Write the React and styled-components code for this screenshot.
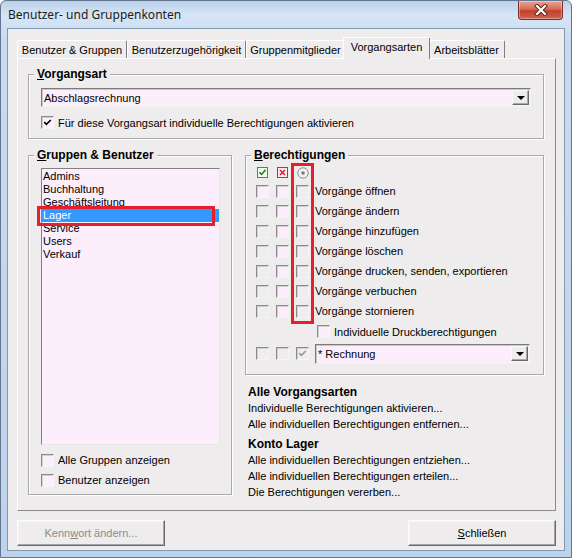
import React from 'react'
import styled, { createGlobalStyle } from 'styled-components'

const BG = '#eeecec'
const PINK = '#fdeefc'
const FONT = '"Liberation Sans", Arial, sans-serif'

const GlobalStyle = createGlobalStyle`
  html, body { margin: 0; padding: 0; background: #fff; }
  body { font-family: ${FONT}; font-size: 11px; color: #000; }
  * { box-sizing: border-box; }
`

const Window = styled.div`
  width: 572px;
  height: 558px;
  border: 1px solid #62778f;
  border-radius: 6px 6px 0 0;
  background: linear-gradient(180deg, #bad1eb 0px, #d6e5f6 14px, #c8dbf0 40px, #bdd3eb 100%);
  padding: 0 6px 6px;
  display: flex;
  flex-direction: column;
  overflow: hidden;
`

const TitleBar = styled.div`
  height: 27px;
  display: flex;
  justify-content: space-between;
  align-items: flex-start;
`

const Title = styled.div`
  font-family: "Noto Sans", ${FONT};
  font-size: 12px;
  line-height: 16px;
  color: #1b1b1b;
  margin: 6px 0 0 1px;
`

const CloseButton = styled.div`
  width: 45px;
  height: 19px;
  margin-right: 2px;
  border: 1px solid #7a2e25;
  border-top: none;
  border-radius: 0 0 4px 4px;
  background: linear-gradient(180deg, #e9a598 0%, #d66a58 45%, #c23f2d 55%, #d2644d 100%);
  box-shadow: inset 0 0 0 1px rgba(255, 255, 255, 0.35);
  display: flex;
  align-items: center;
  justify-content: center;
`

const Client = styled.div`
  flex: 1;
  border: 1px solid #8299b4;
  background: ${BG};
  padding: 8px 8px 0 9px;
  display: flex;
  flex-direction: column;
`

const TabStrip = styled.div`
  height: 21px;
  display: flex;
  align-items: flex-end;
`

const Tab = styled.div`
  position: relative;
  width: ${p => p.$w}px;
  height: ${p => (p.$active ? 22 : 18)}px;
  margin: ${p => (p.$active ? '0 -2px -1px' : '0')};
  z-index: ${p => (p.$active ? 2 : 1)};
  border: 1px solid;
  border-bottom: none;
  border-color: #fff #7e7e7e #7e7e7e #fff;
  border-radius: 2px 2px 0 0;
  background: ${BG};
  display: flex;
  align-items: ${p => (p.$active ? 'flex-start' : 'center')};
  justify-content: center;
  padding-top: ${p => (p.$active ? 3 : 0)}px;
  white-space: nowrap;
`

const Panel = styled.div`
  width: 539px;
  height: 453px;
  border: 1px solid;
  border-color: #fff #8a8a8a #8a8a8a #fff;
  padding: 15px 11px 0 10px;
  display: flex;
  flex-direction: column;
`

const Group = styled.div`
  position: relative;
  width: ${p => p.$w}px;
  height: ${p => p.$h}px;
  border: 1px solid #a9a9a9;
  box-shadow: 1px 1px 0 #fff, inset 1px 1px 0 #fff;
  padding: ${p => p.$pad};
  display: flex;
  flex-direction: column;
`

const Legend = styled.span`
  position: absolute;
  top: -8px;
  left: 5px;
  padding: 0 3px;
  background: ${BG};
  font-weight: bold;
  font-size: 12px;
  line-height: 15px;
`

const Key = styled.span`
  text-decoration: underline;
`

const Combo = styled.div`
  width: ${p => p.$w}px;
  height: ${p => p.$h}px;
  flex: none;
  border: 1px solid;
  border-color: #7c7c7c #f2f2f2 #f2f2f2 #7c7c7c;
  box-shadow: inset 1px 1px 0 #c8c8c8;
  background: ${PINK};
  padding: 1px 1px 1px 2px;
  display: flex;
  align-items: center;
  justify-content: space-between;
`

const DropButton = styled.span`
  width: 17px;
  height: 15px;
  border: 1px solid;
  border-color: #fbfbfb #6a6a6a #6a6a6a #fbfbfb;
  box-shadow: inset -1px -1px 0 #a8a8a8;
  background: ${BG};
  display: flex;
  align-items: center;
  justify-content: center;

  &::after {
    content: '';
    border-left: 4px solid transparent;
    border-right: 4px solid transparent;
    border-top: 4px solid #000;
  }
`

const CheckRow = styled.div`
  height: ${p => p.$h || 20}px;
  margin-top: ${p => p.$mt || 0}px;
  padding-left: ${p => p.$indent || 0}px;
  display: flex;
  align-items: center;
  gap: 4px;
  white-space: nowrap;
`

const Box = styled.span`
  width: 13px;
  height: 13px;
  flex: none;
  border: 1px solid;
  border-color: #8a8a8a #f6f6f6 #f6f6f6 #8a8a8a;
  box-shadow: inset 1px 1px 0 #d0d0d0;
  background: ${p => (p.$disabled ? '#efeded' : PINK)};
  display: flex;
  align-items: center;
  justify-content: center;
`

const Columns = styled.div`
  display: flex;
  gap: 13px;
  margin-top: 16px;
`

const RightCol = styled.div`
  display: flex;
  flex-direction: column;
`

const ListBox = styled.div`
  position: relative;
  width: 179px;
  height: 277px;
  flex: none;
  border: 1px solid;
  border-color: #828282 #e6e6e6 #e6e6e6 #828282;
  background: ${PINK};
  padding: 1px 0;
`

const Item = styled.div`
  height: 13px;
  line-height: 13px;
  padding-left: 1px;
  background: ${p => (p.$selected ? '#3399ff' : 'transparent')};
  color: ${p => (p.$selected ? '#fff' : '#000')};
`

const Mark = styled.span`
  position: absolute;
  left: ${p => p.$x}px;
  top: ${p => p.$y}px;
  width: ${p => p.$w}px;
  height: ${p => p.$h}px;
  border: 3px solid #e3202b;
  pointer-events: none;
`

const PermList = styled.div`
  position: relative;
  display: flex;
  flex-direction: column;
`

const PermRow = styled.div`
  height: ${p => p.$h}px;
  display: flex;
  align-items: center;
  gap: 7px;
  white-space: nowrap;
`

const Cell = styled.span`
  width: 13px;
  height: 13px;
  flex: none;
  display: flex;
  align-items: center;
  justify-content: center;
`

const PermLabel = styled.span`
  margin-left: -1px;
`

const Actions = styled.div`
  margin-top: 9px;
  padding-left: 3px;
  display: flex;
  flex-direction: column;
`

const ActionHead = styled.div`
  font-weight: bold;
  font-size: 12px;
  line-height: 16px;
  margin-top: ${p => (p.$gap ? 4 : 0)}px;
`

const ActionLink = styled.div`
  line-height: 16px;
`

const ButtonRow = styled.div`
  width: 539px;
  margin-top: 9px;
  display: flex;
  justify-content: space-between;
`

const Button = styled.div`
  width: 148px;
  height: 26px;
  border: 1px solid;
  border-color: #fbfbfb #6a6a6a #6a6a6a #fbfbfb;
  box-shadow: inset -1px -1px 0 #a6a6a6, inset 1px 1px 0 #f4f4f4;
  background: ${BG};
  color: ${p => (p.$disabled ? '#8c8c8c' : '#000')};
  display: flex;
  align-items: center;
  justify-content: center;
`

const Check = ({ color = '#000' }) => (
  <svg width="9" height="9" viewBox="0 0 9 9">
    <path d="M1.2 4.2 L3.4 6.4 L7.8 2" fill="none" stroke={color} strokeWidth="1.7" />
  </svg>
)

const AllowIcon = () => (
  <svg width="11" height="11" viewBox="0 0 11 11">
    <rect x="0.5" y="0.5" width="10" height="10" fill="#f3fbef" stroke="#2e9d38" />
    <path d="M2.5 5.2 L4.6 7.4 L8.6 2.8" fill="none" stroke="#17802a" strokeWidth="1.6" />
  </svg>
)

const DenyIcon = () => (
  <svg width="11" height="11" viewBox="0 0 11 11">
    <rect x="0.5" y="0.5" width="10" height="10" fill="#fde8ee" stroke="#e5202a" />
    <path d="M3 3 L8 8 M8 3 L3 8" fill="none" stroke="#e5202a" strokeWidth="1.6" />
  </svg>
)

const InheritIcon = () => (
  <svg width="12" height="12" viewBox="0 0 12 12">
    <circle cx="6" cy="6" r="5.2" fill="#f2f2f2" stroke="#8c8c8c" />
    <circle cx="6" cy="6" r="1.8" fill="#7a7a7a" />
  </svg>
)

const tabs = [
  { label: 'Benutzer & Gruppen', w: 110 },
  { label: 'Benutzerzugehörigkeit', w: 119 },
  { label: 'Gruppenmitglieder', w: 99 },
  { label: 'Vorgangsarten', w: 87, active: true },
  { label: 'Arbeitsblätter', w: 77 },
]

const accounts = ['Admins', 'Buchhaltung', 'Geschäftsleitung', 'Lager', 'Service', 'Users', 'Verkauf']

const permissions = [
  'Vorgänge öffnen',
  'Vorgänge ändern',
  'Vorgänge hinzufügen',
  'Vorgänge löschen',
  'Vorgänge drucken, senden, exportieren',
  'Vorgänge verbuchen',
  'Vorgänge stornieren',
]

export default function App() {
  return (
    <>
      <GlobalStyle />
      <Window>
        <TitleBar>
          <Title>Benutzer- und Gruppenkonten</Title>
          <CloseButton>
            <svg width="14" height="12" viewBox="0 0 14 12">
              <path d="M3 2 L11 10 M11 2 L3 10" stroke="#5a2018" strokeWidth="4" strokeLinecap="square" />
              <path d="M3 2 L11 10 M11 2 L3 10" stroke="#fff" strokeWidth="2.2" strokeLinecap="square" />
            </svg>
          </CloseButton>
        </TitleBar>
        <Client>
          <TabStrip>
            {tabs.map(t => (
              <Tab key={t.label} $w={t.w} $active={t.active}>
                {t.label}
              </Tab>
            ))}
          </TabStrip>
          <Panel>
            <Group $w={516} $h={65} $pad="13px 0 0 12px">
              <Legend>
                <Key>V</Key>organgsart
              </Legend>
              <Combo $w={490} $h={19}>
                <span>Abschlagsrechnung</span>
                <DropButton />
              </Combo>
              <CheckRow $h={13} $mt={9}>
                <Box>
                  <Check />
                </Box>
                <span>Für diese Vorgangsart individuelle Berechtigungen aktivieren</span>
              </CheckRow>
            </Group>

            <Columns>
              <Group $w={204} $h={340} $pad="12px 0 0 12px">
                <Legend>
                  <Key>G</Key>ruppen &amp; Benutzer
                </Legend>
                <ListBox>
                  {accounts.map(a => (
                    <Item key={a} $selected={a === 'Lager'}>
                      {a}
                    </Item>
                  ))}
                  <Mark $x={-5} $y={37} $w={178} $h={20} />
                </ListBox>
                <CheckRow $mt={5}>
                  <Box />
                  <span>Alle Gruppen anzeigen</span>
                </CheckRow>
                <CheckRow>
                  <Box />
                  <span>Benutzer anzeigen</span>
                </CheckRow>
              </Group>

              <RightCol>
                <Group $w={299} $h={220} $pad="8px 0 0 10px">
                  <Legend>
                    <Key>B</Key>erechtigungen
                  </Legend>
                  <PermList>
                    <PermRow $h={17}>
                      <Cell>
                        <AllowIcon />
                      </Cell>
                      <Cell>
                        <DenyIcon />
                      </Cell>
                      <Cell>
                        <InheritIcon />
                      </Cell>
                    </PermRow>
                    {permissions.map((p, i) => (
                      <PermRow key={p} $h={20}>
                        <Box $disabled={i > 0} />
                        <Box />
                        <Box $disabled />
                        <PermLabel>{p}</PermLabel>
                      </PermRow>
                    ))}
                    <CheckRow $h={21} $indent={61}>
                      <Box />
                      <span>Individuelle Druckberechtigungen</span>
                    </CheckRow>
                    <PermRow $h={23}>
                      <Box $disabled />
                      <Box $disabled />
                      <Box $disabled>
                        <Check color="#9a9a9a" />
                      </Box>
                      <Combo $w={215} $h={20} style={{ marginLeft: -1 }}>
                        <span>* Rechnung</span>
                        <DropButton />
                      </Combo>
                    </PermRow>
                    <Mark $x={35} $y={-1} $w={23} $h={161} />
                  </PermList>
                </Group>

                <Actions>
                  <ActionHead>Alle Vorgangsarten</ActionHead>
                  <ActionLink>Individuelle Berechtigungen aktivieren...</ActionLink>
                  <ActionLink>Alle individuellen Berechtigungen entfernen...</ActionLink>
                  <ActionHead $gap>Konto Lager</ActionHead>
                  <ActionLink>Alle individuellen Berechtigungen entziehen...</ActionLink>
                  <ActionLink>Alle individuellen Berechtigungen erteilen...</ActionLink>
                  <ActionLink>Die Berechtigungen vererben...</ActionLink>
                </Actions>
              </RightCol>
            </Columns>
          </Panel>

          <ButtonRow>
            <Button $disabled>
              <span>
                Kenn<Key>w</Key>ort ändern...
              </span>
            </Button>
            <Button>
              <span>
                <Key>S</Key>chließen
              </span>
            </Button>
          </ButtonRow>
        </Client>
      </Window>
    </>
  )
}
